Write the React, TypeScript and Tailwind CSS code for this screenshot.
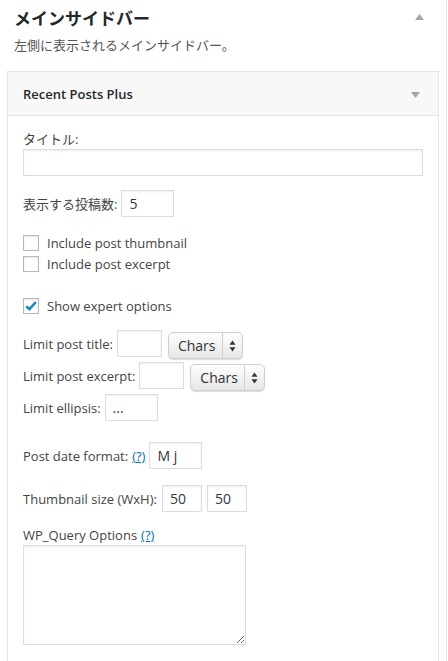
import React from "react";

const font = { fontFamily: '"Open Sans", "Noto Sans CJK JP", sans-serif' };

function TextInput({ value = "", className = "" }: { value?: string; className?: string }) {
  return (
    <input
      type="text"
      defaultValue={value}
      className={`h-[27px] border border-[#dddddd] bg-white px-[7px] text-[14px] text-[#32373c] shadow-[inset_0_1px_2px_rgba(0,0,0,0.07)] outline-none ${className}`}
    />
  );
}

function Checkbox({ checked = false }: { checked?: boolean }) {
  return (
    <span className="flex h-4 w-4 shrink-0 items-center justify-center border border-[#b4b9be] bg-white shadow-[inset_0_1px_2px_rgba(0,0,0,0.1)]">
      {checked && (
        <svg width="14" height="14" viewBox="0 0 14 14">
          <path d="M2.2 7.2 L5.4 10.2 L11.8 3.2" fill="none" stroke="#1e8cbe" strokeWidth="2.6" />
        </svg>
      )}
    </span>
  );
}

function FakeSelect() {
  return (
    <span className="flex h-[27px] w-[75px] items-center rounded-[5px] border border-[#d0d0d0] bg-gradient-to-b from-white to-[#e6e6e6] text-[14px] text-[#333] shadow-[0_1px_1px_rgba(0,0,0,0.15)]">
      <span className="flex-1 pl-[9px]">Chars</span>
      <span className="flex h-full w-[20px] items-center justify-center border-l border-[#d0d0d0]">
        <svg width="7" height="12" viewBox="0 0 7 12">
          <path d="M3.5 0.5 L6.5 4.8 L0.5 4.8 Z" fill="#333" />
          <path d="M3.5 11.5 L6.5 7.2 L0.5 7.2 Z" fill="#333" />
        </svg>
      </span>
    </span>
  );
}

function Help() {
  return <a className="text-[13px] leading-[20px] text-[#0073aa] underline">(?)</a>;
}

export default function App() {
  return (
    <div className="h-[661px] w-[447px] overflow-hidden border-r border-[#e5e5e5] bg-white text-[13px] leading-[20px] text-[#444]" style={font}>
      <div className="relative px-[14px] pt-[8px]">
        <h2 className="text-[17px] font-bold leading-[22px] text-[#23282d]">メインサイドバー</h2>
        <svg className="absolute right-[22px] top-[14px]" width="9" height="6" viewBox="0 0 9 6">
          <path d="M4.5 0 L9 6 L0 6 Z" fill="#a0a5aa" />
        </svg>
        <p className="mt-[5px] text-[13px] leading-[20px] text-[#555]">左側に表示されるメインサイドバー。</p>
      </div>

      <div className="ml-[7px] mt-[16px] w-[432px] border border-[#e5e5e5]">
        <div className="relative flex h-[44px] items-center border-b border-[#e5e5e5] bg-[#f8f8f8] px-[15px]">
          <span className="text-[13px] font-semibold text-[#23282d]">Recent Posts Plus</span>
          <svg className="absolute right-[18px] top-[20px]" width="9" height="6" viewBox="0 0 9 6">
            <path d="M0 0 L9 0 L4.5 6 Z" fill="#a0a5aa" />
          </svg>
        </div>

        <div className="h-[600px] bg-white px-[15px] pt-[13px]">
          <div>タイトル:</div>
          <TextInput className="w-[400px]" />

          <div className="mt-[14px] flex h-[27px] items-center">
            <span>表示する投稿数:</span>
            <TextInput value="5" className="ml-[4px] w-[53px]" />
          </div>

          <div className="mt-[18px] flex h-4 items-center">
            <Checkbox />
            <span className="ml-[8px]">Include post thumbnail</span>
          </div>
          <div className="mt-[5px] flex h-4 items-center">
            <Checkbox />
            <span className="ml-[8px]">Include post excerpt</span>
          </div>

          <div className="mt-[26px] flex h-4 items-center">
            <Checkbox checked />
            <span className="ml-[8px]">Show expert options</span>
          </div>

          <div className="mt-[16px] flex h-[27px] items-start">
            <span className="self-center">Limit post title:</span>
            <TextInput className="ml-[4px] w-[45px]" />
            <span className="ml-[6px] mt-[2px]"><FakeSelect /></span>
          </div>
          <div className="mt-[5px] flex h-[27px] items-start">
            <span className="self-center">Limit post excerpt:</span>
            <TextInput className="ml-[4px] w-[45px]" />
            <span className="ml-[6px] mt-[2px]"><FakeSelect /></span>
          </div>
          <div className="mt-[5px] flex h-[27px] items-center">
            <span>Limit ellipsis:</span>
            <TextInput value="..." className="ml-[4px] w-[53px]" />
          </div>

          <div className="mt-[21px] flex h-[27px] items-center">
            <span>Post date format:</span>
            <span className="ml-[4px]"><Help /></span>
            <TextInput value="M j" className="ml-[4px] w-[53px]" />
          </div>

          <div className="mt-[16px] flex h-[27px] items-center">
            <span>Thumbnail size (WxH):</span>
            <TextInput value="50" className="ml-[5px] w-[40px]" />
            <TextInput value="50" className="ml-[5px] w-[40px]" />
          </div>

          <div className="mt-[13px] flex h-[20px] items-center">
            <span>WP_Query Options</span>
            <span className="ml-[4px]"><Help /></span>
          </div>
          <textarea className="block h-[100px] w-[223px] border border-[#dddddd] bg-white shadow-[inset_0_1px_2px_rgba(0,0,0,0.07)] outline-none" />
        </div>
      </div>
    </div>
  );
}
